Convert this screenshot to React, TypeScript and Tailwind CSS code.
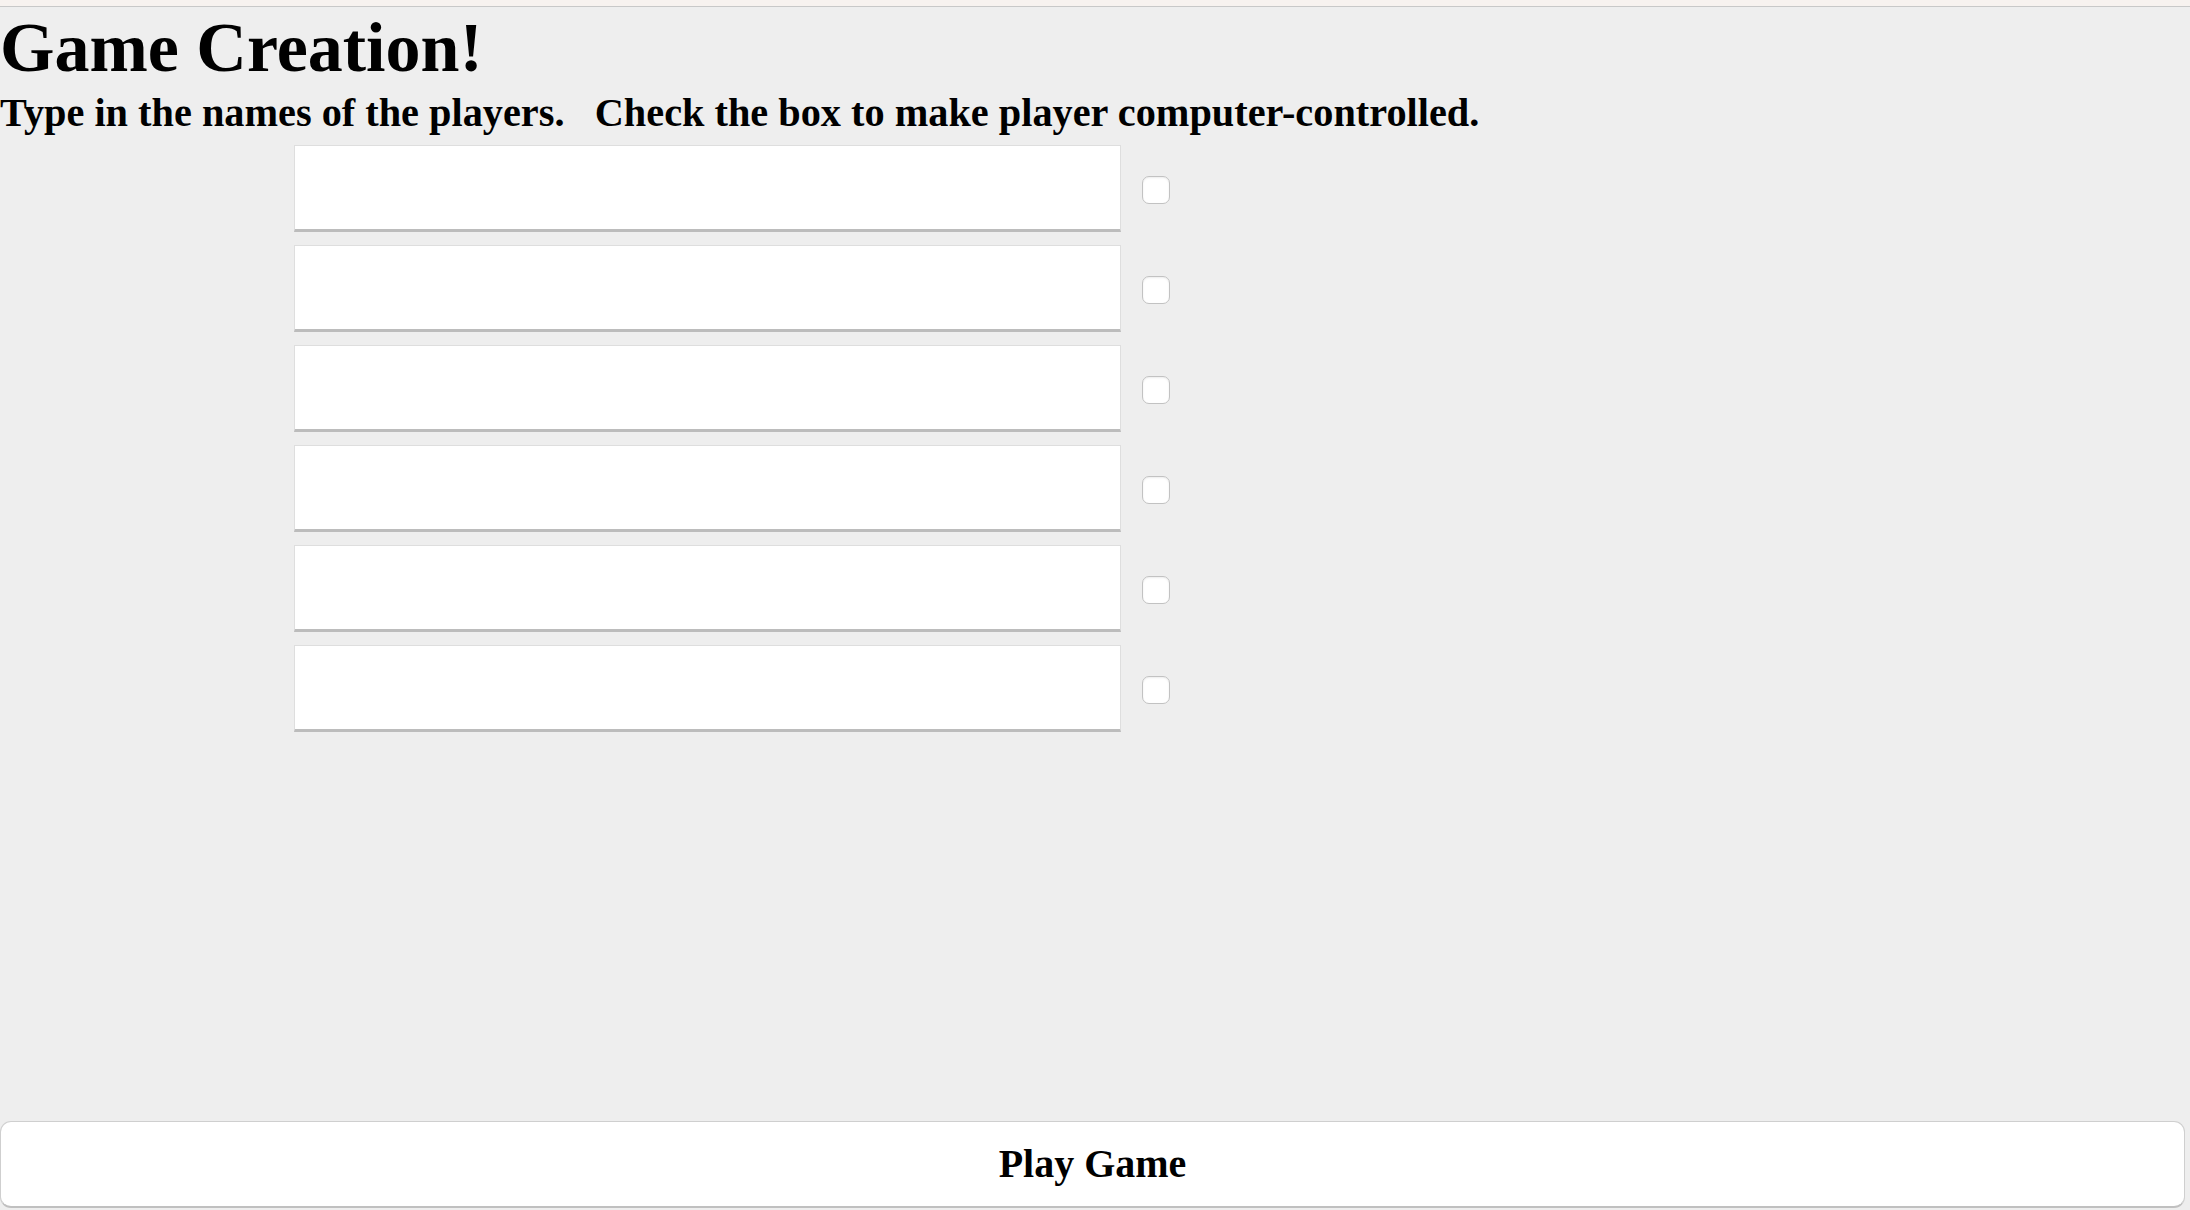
import React from 'react';

const players = [0, 1, 2, 3, 4, 5];

export default function App() {
  return (
    <div className="h-[1210px] w-full bg-[#eeeeee] flex flex-col font-['Liberation_Serif',serif] text-black overflow-hidden">
      <div className="h-[7px] bg-[#f7f2ef] border-b border-[#c8c8c8] shrink-0" />
      <h1 className="m-0 text-[70px] font-bold leading-[81px] whitespace-nowrap">Game Creation!</h1>
      <h3 className="m-0 text-[40.3px] font-bold leading-[49px] whitespace-pre">
        {'Type in the names of the players.   Check the box to make player computer-controlled.'}
      </h3>
      <div className="mt-[8px] ml-[294px] flex flex-col gap-[13px]">
        {players.map(i => (
          <div key={i} className="flex items-center gap-[21px]">
            <input
              type="text"
              className="w-[827px] h-[87px] bg-white border border-[#dedede] border-b-[3px] border-b-[#bcbcbc] outline-none px-3 text-[32px]"
            />
            <input
              type="checkbox"
              className="appearance-none mt-[3px] w-[28px] h-[28px] rounded-[7px] border border-[#c2c2c2] bg-white shadow-[inset_0_1px_2px_rgba(0,0,0,0.08)]"
            />
          </div>
        ))}
      </div>
      <button className="mt-auto mb-[2px] mr-[5px] h-[87px] bg-white rounded-[11px] border border-[#cfcfcf] border-b-[2px] border-b-[#c0c0c0] text-[40px] font-bold font-['Liberation_Serif',serif] text-black">
        Play Game
      </button>
    </div>
  );
}
